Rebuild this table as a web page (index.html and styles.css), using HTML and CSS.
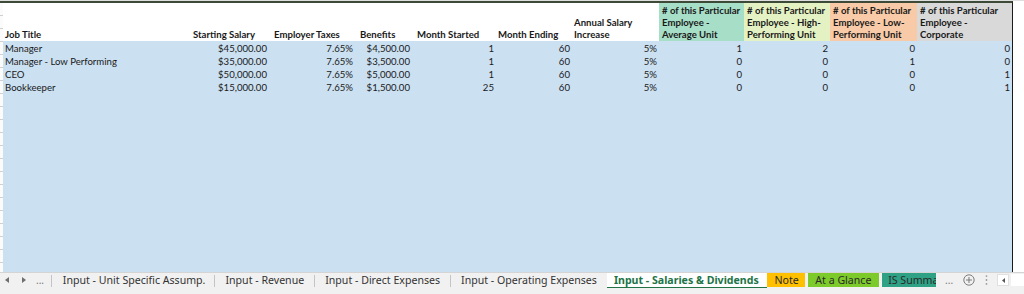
FILE: index.html
```html
<!DOCTYPE html>
<html>
<head>
<meta charset="utf-8">
<link rel="stylesheet" href="styles.css">
</head>
<body>
<div class="app">
  <div class="sheet">
    <div class="grid">
      <div class="row head">
        <div class="c b">Job Title</div>
        <div class="c b">Starting Salary</div>
        <div class="c b ind">Employer Taxes</div>
        <div class="c b ind">Benefits</div>
        <div class="c b ind">Month Started</div>
        <div class="c b">Month Ending</div>
        <div class="c b">Annual Salary Increase</div>
        <div class="c b hc teal"># of this Particular Employee - Average Unit</div>
        <div class="c b hc lime"># of this Particular Employee - High-Performing Unit</div>
        <div class="c b hc peach"># of this Particular Employee - Low-Performing Unit</div>
        <div class="c b hc grey"># of this Particular Employee - Corporate</div>
      </div>
      <div class="row data">
        <div class="c">Manager</div><div class="c n">$45,000.00</div><div class="c n">7.65%</div><div class="c n">$4,500.00</div><div class="c n">1</div><div class="c n">60</div><div class="c n">5%</div><div class="c n">1</div><div class="c n">2</div><div class="c n">0</div><div class="c n">0</div>
      </div>
      <div class="row data">
        <div class="c">Manager - Low Performing</div><div class="c n">$35,000.00</div><div class="c n">7.65%</div><div class="c n">$3,500.00</div><div class="c n">1</div><div class="c n">60</div><div class="c n">5%</div><div class="c n">0</div><div class="c n">0</div><div class="c n">1</div><div class="c n">0</div>
      </div>
      <div class="row data">
        <div class="c">CEO</div><div class="c n">$50,000.00</div><div class="c n">7.65%</div><div class="c n">$5,000.00</div><div class="c n">1</div><div class="c n">60</div><div class="c n">5%</div><div class="c n">0</div><div class="c n">0</div><div class="c n">0</div><div class="c n">1</div>
      </div>
      <div class="row data">
        <div class="c">Bookkeeper</div><div class="c n">$15,000.00</div><div class="c n">7.65%</div><div class="c n">$1,500.00</div><div class="c n">25</div><div class="c n">60</div><div class="c n">5%</div><div class="c n">0</div><div class="c n">0</div><div class="c n">0</div><div class="c n">1</div>
      </div>
      <div class="fill"></div>
    </div>
    <div class="gutter"></div>
  </div>
  <div class="tabs">
    <div class="nav">
      <svg class="arr" width="4" height="6" viewBox="0 0 4 6"><path d="M4 0 L0 3 L4 6 Z" fill="#6e6e6e"/></svg>
      <svg class="arr arr2" width="4" height="6" viewBox="0 0 4 6"><path d="M0 0 L4 3 L0 6 Z" fill="#6e6e6e"/></svg>
      <span class="dots">...</span>
    </div>
    <span class="sep"></span>
    <div class="tab wide">Input - Unit Specific Assump.</div>
    <span class="sep"></span>
    <div class="tab">Input - Revenue</div>
    <span class="sep"></span>
    <div class="tab">Input - Direct Expenses</div>
    <span class="sep"></span>
    <div class="tab">Input - Operating Expenses</div>
    <div class="tab active">Input - Salaries &amp; Dividends</div>
    <div class="tab col note">Note</div>
    <div class="tab col glance">At a Glance</div>
    <div class="tab col summ">IS Summary</div>
    <span class="more">...</span>
    <svg class="plus" width="12" height="12" viewBox="0 0 12 12"><circle cx="6" cy="6" r="5.2" fill="none" stroke="#7a7a7a" stroke-width="1"/><path d="M6 3 V9 M3 6 H9" stroke="#7a7a7a" stroke-width="1"/></svg>
    <svg class="vdots" width="3" height="12" viewBox="0 0 3 12"><circle cx="1.5" cy="2" r="0.9" fill="#9a9a9a"/><circle cx="1.5" cy="6" r="0.9" fill="#9a9a9a"/><circle cx="1.5" cy="10" r="0.9" fill="#9a9a9a"/></svg>
    <div class="scroll">
      <div class="sbtn"><svg width="3" height="5" viewBox="0 0 3 5"><path d="M3 0 L0 2.5 L3 5 Z" fill="#555"/></svg></div>
      <div class="sbox"></div>
    </div>
  </div>
</div>
</body>
</html>
```

FILE: styles.css
```css
html, body {
  margin: 0;
  padding: 0;
  background: #fff;
}
.app {
  width: 1024px;
  height: 294px;
  display: flex;
  flex-direction: column;
  border-top: 1px solid #dedede;
  box-sizing: border-box;
  overflow: hidden;
}
.sheet {
  flex: 1;
  display: flex;
  min-height: 0;
}
.grid {
  width: 1009px;
  display: flex;
  flex-direction: column;
  padding-left: 3px;
  border-top: 2px solid #3d4a38;
  border-right: 1px solid #1a1a1a;
  background-color: #fbfbfb;
  background-image: linear-gradient(to bottom, transparent 12px, #d0d0d0 12px);
  background-size: 3px 13px;
  background-repeat: repeat-y;
  background-position: 0 0;
}
.gutter {
  flex: 1;
  background: #fff;
}
.row {
  display: grid;
  grid-template-columns: 188px 78px 86px 57px 84px 76px 87px 85px 86px 87px 95px;
  font-family: Lato, "Liberation Sans", sans-serif;
  font-size: 9.6px;
  color: #1a1a1a;
}
.head {
  height: 38px;
  background: #fff;
}
.data {
  height: 13px;
  line-height: 15px;
  background: #cbe0f1;
  overflow: hidden;
}
.fill {
  flex: 1;
  background: #cbe0f1;
}
.c {
  padding: 0 2px;
  white-space: nowrap;
  overflow: hidden;
}
.n {
  text-align: right;
}
.b {
  font-weight: 700;
  align-self: end;
  line-height: 12px;
  white-space: normal;
}
.ind {
  padding-left: 5px;
}
.hc {
  align-self: stretch;
  display: flex;
  align-items: flex-end;
  padding: 0 2px 0 3px;
}
.teal { background: #a7dec8; }
.lime { background: #e4f2c3; }
.peach { background: #f8caa7; }
.grey { background: #d9d9d9; }

.tabs {
  height: 22px;
  flex: none;
  display: flex;
  align-items: flex-start;
  background: #f1f1f1;
  border-top: 1px solid #d4d4d4;
  box-sizing: border-box;
  font-family: "Noto Sans", "Liberation Sans", sans-serif;
  font-size: 10.6px;
  color: #333;
}
.nav {
  width: 51px;
  height: 14px;
  display: flex;
  align-items: center;
  padding-left: 5px;
  box-sizing: border-box;
}
.arr2 { margin-left: 13px; }
.dots {
  margin-left: 10px;
  color: #777;
  font-size: 10px;
  line-height: 14px;
}
.sep {
  width: 1px;
  height: 12px;
  margin-top: 2px;
  background: #c4c4c4;
}
.tab {
  height: 14px;
  line-height: 14px;
  padding: 0 10px;
  white-space: nowrap;
}
.tab.wide {
  padding-left: 11px;
  padding-right: 9px;
}
.active {
  width: 161px;
  box-sizing: border-box;
  padding: 0 7px;
  background: #fff;
  color: #217346;
  font-weight: 700;
  border-bottom: 1px solid #217346;
  height: 15px;
}
.col {
  padding: 0 5px;
  color: #2a2a2a;
}
.note {
  width: 38px;
  box-sizing: border-box;
  background: #ffc000;
  padding-left: 7px;
}
.glance {
  margin-left: 3px;
  width: 71px;
  box-sizing: border-box;
  background: #7ccb2b;
  padding-left: 7px;
}
.summ {
  margin-left: 3px;
  width: 54px;
  box-sizing: border-box;
  background: #2fa184;
  padding-left: 6px;
  overflow: hidden;
}
.more {
  margin-left: 9px;
  color: #777;
  font-size: 10px;
  line-height: 14px;
}
.plus {
  margin-left: 10px;
  margin-top: 1px;
}
.vdots {
  margin-left: 10px;
  margin-top: 1px;
}
.scroll {
  margin-left: 9px;
  display: flex;
  gap: 2px;
  margin-top: 1px;
}
.sbtn {
  width: 12px;
  height: 12px;
  background: #fff;
  border: 1px solid #e0e0e0;
  box-sizing: border-box;
  display: flex;
  align-items: center;
  justify-content: center;
}
.sbox {
  width: 13px;
  height: 12px;
  background: #fff;
}
```
